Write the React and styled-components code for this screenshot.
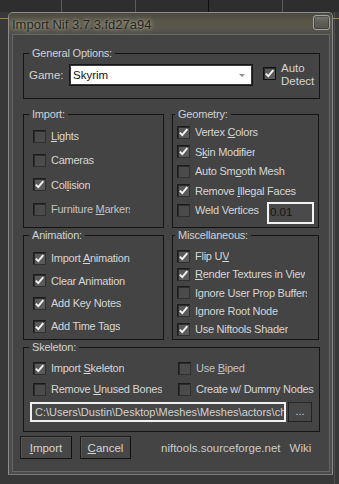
import React from "react";
import styled, { createGlobalStyle } from "styled-components";

const Global = createGlobalStyle`
  html, body { margin: 0; padding: 0; }
  body {
    width: 339px; height: 484px; overflow: hidden;
    font-family: "Liberation Sans", Arial, sans-serif;
    background: #363636;
  }
  * { box-sizing: border-box; }
`;

const Page = styled.div`
  position: relative;
  width: 339px;
  height: 484px;
  background:
    linear-gradient(#9c8a3a, #9c8a3a) 0 18px / 100% 1px no-repeat,
    linear-gradient(#505050, #505050) 334px 12px / 1px 100% no-repeat,
    #383838;
  display: flex;
  flex-direction: column;
`;

const TopStrip = styled.div`
  height: 12px;
  flex: none;
  background:
    linear-gradient(#5c5c5c, #5c5c5c) 61px 0 / 1px 100% no-repeat,
    linear-gradient(#5c5c5c, #5c5c5c) 135px 0 / 1px 100% no-repeat,
    linear-gradient(#0e0e0e, #0e0e0e) 208px 0 / 1px 100% no-repeat,
    linear-gradient(#5c5c5c, #5c5c5c) 282px 0 / 1px 100% no-repeat,
    #2e2e2e;
`;

const Window = styled.div`
  margin-left: 8px;
  width: 325px;
  height: 463px;
  border: 1px solid #8c8c8c;
  border-bottom-color: #7a7a7a;
  border-radius: 5px 5px 0 0;
  background: #4c4c4c;
  padding: 0 2px 2px 2px;
  display: flex;
  flex-direction: column;
`;

const TitleBar = styled.div`
  height: 21px;
  flex: none;
  margin: 0 -2px;
  padding: 0 2px 0 3px;
  border-radius: 4px 4px 0 0;
  display: flex;
  align-items: center;
  background: linear-gradient(to bottom, #4a4942 0%, #5b5849 45%, #57554a 75%, #4f4e48 100%);
`;

const Title = styled.div`
  flex: 1;
  font-size: 13px;
  color: #262624;
  text-shadow: 0 0 6px rgba(215, 210, 185, 0.75), 0 0 3px rgba(215, 210, 185, 0.55);
  white-space: nowrap;
  padding-top: 1px;
`;

const CloseButton = styled.div`
  width: 17px;
  height: 15px;
  margin-top: 2px;
  align-self: flex-start;
  border: 1px solid #a4a4a0;
  border-radius: 3px;
  background: linear-gradient(#77766f, #5e5d57 50%, #55544f);
  box-shadow: inset 0 0 0 1px rgba(40, 40, 40, 0.5);
`;

const Client = styled.div`
  flex: 1;
  margin-left: 1px;
  border: 1px solid #686868;
  background: #444444;
  padding: 11px 9px 0 10px;
  display: flex;
  flex-direction: column;
`;

const Group = styled.fieldset`
  margin: 0;
  padding: 0;
  min-width: 0;
  border: 1px solid #141414;
  height: ${(p) => p.$h}px;
  display: flex;
  flex-direction: column;
`;

const Legend = styled.legend`
  font-size: 11px;
  letter-spacing: -0.2px;
  line-height: 15px;
  height: 15px;
  color: #cdd2d6;
  padding: 0 3px;
  margin-left: ${(p) => p.$ml}px;
`;

const Middle = styled.div`
  margin-top: 8px;
  display: grid;
  grid-template-columns: 141px 147px;
  grid-template-rows: 121px 112px;
  column-gap: 8px;
`;

const Rows = styled.div`
  display: flex;
  flex-direction: column;
  gap: ${(p) => p.$gap}px;
  padding-left: ${(p) => p.$pl}px;
  padding-top: ${(p) => p.$pt}px;
`;

const Row = styled.div`
  display: flex;
  align-items: center;
  height: 16px;
  gap: 5px;
  overflow: visible;
`;

const Box = styled.span`
  flex: none;
  width: 13px;
  height: 13px;
  border: 1px solid #1c1c1c;
  border-right-color: #303030;
  border-bottom-color: #303030;
  background: ${(p) => (p.$on ? "#5a5a5a" : "#4b4b4b")};
  box-shadow: inset 1px 1px 0 #2c2c2c;
  display: flex;
  align-items: center;
  justify-content: center;
`;

const Label = styled.span`
  font-size: 11px;
  letter-spacing: -0.25px;
  color: ${(p) => (p.$dim ? "#c2c2c2" : "#d6d6d6")};
  white-space: nowrap;
  overflow: hidden;
  max-width: ${(p) => (p.$w ? `${p.$w}px` : "none")};
  line-height: 16px;
`;

const U = styled.span`
  text-decoration: underline;
  text-underline-offset: 1px;
`;

const Check = () => (
  <svg width="11" height="11" viewBox="0 0 11 11">
    <path d="M1.8 5.6 L4.3 8.2 L9.3 2.2" fill="none" stroke="#f4f4f4" strokeWidth="1.9" />
  </svg>
);

const CheckBox = ({ on, children, dim, w }) => (
  <Row>
    <Box $on={on}>{on && <Check />}</Box>
    <Label $dim={dim} $w={w}>{children}</Label>
  </Row>
);

const GeneralRow = styled.div`
  display: flex;
  align-items: center;
  margin-top: 3px;
  padding-left: 5px;
  height: 22px;
`;

const GameLabel = styled.span`
  width: 40px;
  font-size: 11.5px;
  color: #d4d4d4;
`;

const Select = styled.div`
  width: 184px;
  height: 22px;
  border: 1px solid #151515;
  box-shadow: inset 0 0 0 1px #3a3a3a;
  background: #ffffff;
  display: flex;
  align-items: center;
  padding: 0 4px 0 3px;
  font-size: 11.5px;
  color: #111;
`;

const SelectText = styled.span`
  flex: 1;
`;

const Arrow = styled.span`
  width: 0;
  height: 0;
  border-left: 3px solid transparent;
  border-right: 3px solid transparent;
  border-top: 3px solid #8e8e8e;
  margin-right: 3px;
`;

const AutoBox = styled(Box)`
  margin-left: 10px;
  align-self: flex-start;
  margin-top: 3px;
  border-color: #111;
`;

const AutoLabel = styled.span`
  margin-left: 5px;
  font-size: 11.5px;
  line-height: 13px;
  color: #d4d4d4;
`;

const WeldInput = styled.div`
  margin-left: auto;
  margin-right: 4px;
  align-self: flex-start;
  width: 47px;
  height: 22px;
  border: 2px solid #f2f2f2;
  background: #4a4a4a;
  color: #141414;
  font-size: 11.5px;
  padding: 2px 0 0 1px;
  flex: none;
`;

const SkeletonGrid = styled.div`
  display: grid;
  grid-template-columns: 145px auto;
  row-gap: 5px;
  padding-left: 9px;
  margin-top: 5px;
`;

const PathRow = styled.div`
  display: flex;
  gap: 2px;
  margin-top: 5px;
  padding-left: 6px;
`;

const PathInput = styled.div`
  width: 256px;
  height: 20px;
  border: 2px solid #f0f0f0;
  background: #474747;
  color: #d2d2d2;
  font-size: 11px;
  line-height: 16px;
  padding-left: 3px;
  white-space: nowrap;
  overflow: hidden;
`;

const DotsButton = styled.div`
  width: 24px;
  height: 20px;
  border: 1px solid #222;
  border-top-color: #2a2a2a;
  background: #474747;
  color: #d4d4d4;
  font-size: 11px;
  display: flex;
  align-items: center;
  justify-content: center;
  padding-bottom: 2px;
`;

const ButtonRow = styled.div`
  display: flex;
  align-items: center;
  margin-top: 4px;
  margin-left: -3px;
  height: 23px;
`;

const Button = styled.div`
  width: ${(p) => p.$w}px;
  height: 23px;
  margin-right: 8px;
  border: 1px solid #1e1e1e;
  border-right-color: #111;
  border-bottom-color: #111;
  background: #474747;
  box-shadow: inset 1px 1px 0 #555;
  color: #d4d4d4;
  font-size: 11.5px;
  display: flex;
  align-items: center;
  justify-content: center;
`;

const LinkText = styled.span`
  margin-left: ${(p) => p.$ml}px;
  font-size: 11.5px;
  color: #cacaca;
  white-space: nowrap;
`;

export default function App() {
  return (
    <>
      <Global />
      <Page>
        <TopStrip />
        <Window>
          <TitleBar>
            <Title>Import Nif 3.7.3.fd27a94</Title>
            <CloseButton />
          </TitleBar>
          <Client>
            <Group $h={53}>
              <Legend $ml={5}>General Options:</Legend>
              <GeneralRow>
                <GameLabel>Game:</GameLabel>
                <Select>
                  <SelectText>Skyrim</SelectText>
                  <Arrow />
                </Select>
                <AutoBox $on>
                  <Check />
                </AutoBox>
                <AutoLabel>
                  Auto
                  <br />
                  Detect
                </AutoLabel>
              </GeneralRow>
            </Group>

            <Middle>
              <Group $h={121}>
                <Legend $ml={5}>Import:</Legend>
                <Rows $gap={8.4} $pl={9} $pt={6}>
                  <CheckBox>
                    <U>L</U>ights
                  </CheckBox>
                  <CheckBox>Cameras</CheckBox>
                  <CheckBox on>
                    Col<U>l</U>ision
                  </CheckBox>
                  <CheckBox dim w={79}>
                    Furniture <U>M</U>arkers
                  </CheckBox>
                </Rows>
              </Group>

              <Group $h={121}>
                <Legend $ml={2}>Geometry:</Legend>
                <Rows $gap={3.5} $pl={4} $pt={2}>
                  <CheckBox on>
                    Vertex <U>C</U>olors
                  </CheckBox>
                  <CheckBox on>
                    S<U>k</U>in Modifier
                  </CheckBox>
                  <CheckBox>
                    Auto Sm<U>o</U>oth Mesh
                  </CheckBox>
                  <CheckBox on>
                    Remove <U>I</U>llegal Faces
                  </CheckBox>
                  <Row>
                    <Box />
                    <Label>Weld Vertices</Label>
                    <WeldInput>0.01</WeldInput>
                  </Row>
                </Rows>
              </Group>

              <Group $h={112}>
                <Legend $ml={5}>Animation:</Legend>
                <Rows $gap={6.7} $pl={9} $pt={7}>
                  <CheckBox on>
                    Import <U>A</U>nimation
                  </CheckBox>
                  <CheckBox on>Clear Animation</CheckBox>
                  <CheckBox on>Add Key Notes</CheckBox>
                  <CheckBox on>Add Time Tags</CheckBox>
                </Rows>
              </Group>

              <Group $h={112}>
                <Legend $ml={2}>Miscellaneous:</Legend>
                <Rows $gap={2.3} $pl={4} $pt={5}>
                  <CheckBox on>
                    Flip U<U>V</U>
                  </CheckBox>
                  <CheckBox on w={110}>
                    <U>R</U>ender Textures in View
                  </CheckBox>
                  <CheckBox w={112}>Ignore User Prop Buffers</CheckBox>
                  <CheckBox on>Ignore Root Node</CheckBox>
                  <CheckBox on>Use Niftools Shader</CheckBox>
                </Rows>
              </Group>
            </Middle>

            <Group $h={92}>
              <Legend $ml={5}>Skeleton:</Legend>
              <SkeletonGrid>
                <CheckBox on>
                  Import <U>S</U>keleton
                </CheckBox>
                <CheckBox dim>
                  Use <U>B</U>iped
                </CheckBox>
                <CheckBox>
                  Remove <U>U</U>nused Bones
                </CheckBox>
                <CheckBox>Create w/ Dummy Nodes</CheckBox>
              </SkeletonGrid>
              <PathRow>
                <PathInput>C:\Users\Dustin\Desktop\Meshes\Meshes\actors\ch</PathInput>
                <DotsButton>...</DotsButton>
              </PathRow>
            </Group>

            <ButtonRow>
              <Button $w={52}>
                <span>
                  <U>I</U>mport
                </span>
              </Button>
              <Button $w={51}>
                <span>
                  <U>C</U>ancel
                </span>
              </Button>
              <LinkText $ml={22}>niftools.sourceforge.net</LinkText>
              <LinkText $ml={9}>Wiki</LinkText>
            </ButtonRow>
          </Client>
        </Window>
      </Page>
    </>
  );
}
